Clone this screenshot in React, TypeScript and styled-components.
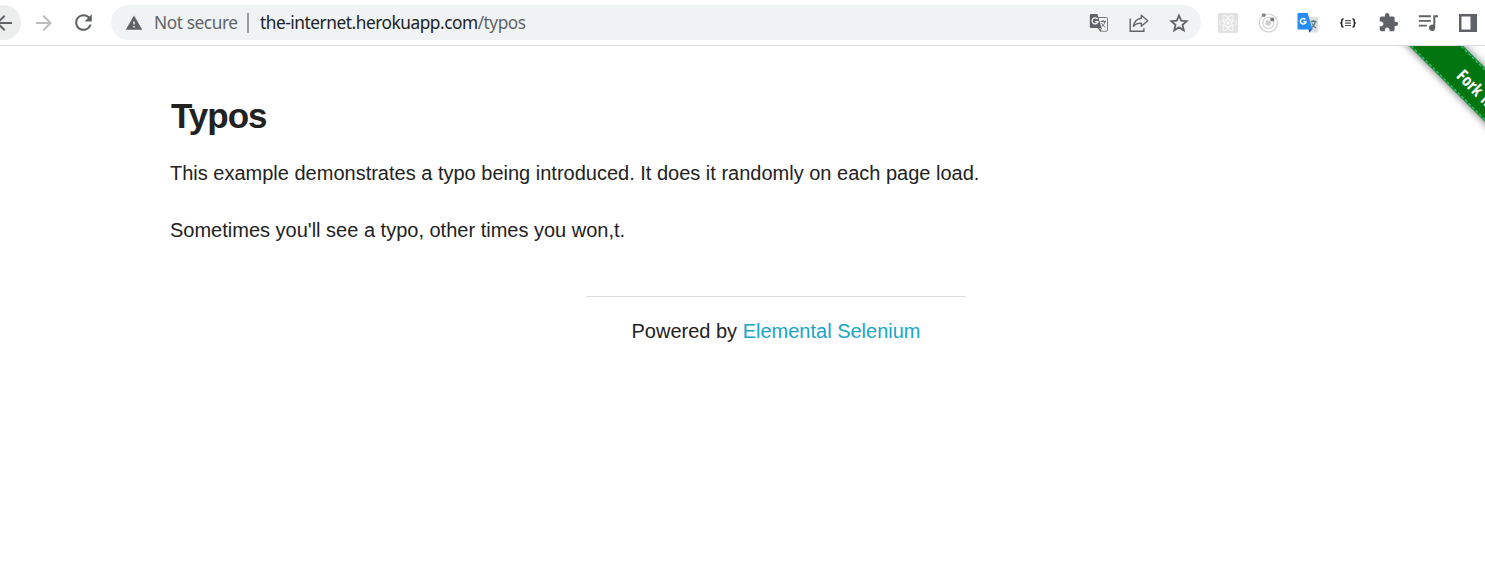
import React from "react";
import styled, { createGlobalStyle } from "styled-components";
import { MdArrowBack, MdArrowForward, MdRefresh, MdWarning, MdExtension } from "react-icons/md";

const GlobalStyle = createGlobalStyle`
  * { box-sizing: border-box; }
  body { margin: 0; background: #fff; overflow: hidden; }
`;

const Window = styled.div`
  display: flex;
  flex-direction: column;
  height: 561px;
`;

const Toolbar = styled.header`
  display: flex;
  align-items: center;
  height: 46px;
  border-bottom: 1px solid #dadce0;
  color: #5f6368;
  overflow: hidden;
`;

const NavButtons = styled.nav`
  display: flex;
  align-items: center;
  width: 111px;
  flex: none;
  gap: 5px;
  margin-left: -14px;
`;

const NavButton = styled.span<{ $hover?: boolean; $muted?: boolean }>`
  display: flex;
  flex: none;
  align-items: center;
  justify-content: center;
  width: 35px;
  height: 35px;
  border-radius: 50%;
  background: ${(p) => (p.$hover ? "#eceeee" : "transparent")};
  color: ${(p) => (p.$muted ? "#babcbe" : "#5f6368")};
`;

const AddressBar = styled.div`
  display: flex;
  align-items: center;
  width: 1090px;
  height: 35px;
  margin-left: 14px;
  padding: 0 2px 0 14px;
  border-radius: 18px;
  background: #eff3f3;
  flex: none;
  font: 17.3px "Noto Sans", sans-serif;
`;

const Security = styled.span`
  width: 84px;
  margin-left: 11px;
  white-space: nowrap;
  letter-spacing: -0.42px;
`;

const Separator = styled.span`
  width: 2px;
  height: 20px;
  margin: 0 11px 0 9px;
  background: #9b9ea1;
`;

const Url = styled.span`
  flex: 1;
  white-space: nowrap;
  letter-spacing: -0.47px;
`;

const Host = styled.span`
  color: #202124;
`;

const IconCell = styled.span`
  display: flex;
  flex: none;
  align-items: center;
  justify-content: center;
  width: 40px;
  height: 35px;
`;

const Extensions = styled.div`
  display: flex;
  flex: none;
  margin-left: 7px;
`;

const Page = styled.main`
  position: relative;
  flex: 1;
  overflow: hidden;
  padding: 49px 104px 0 170px;
  color: #222;
  font: 20px/28px "Liberation Sans", Arial, sans-serif;
`;

const Title = styled.h1`
  margin: 0 0 0 1px;
  font-size: 35px;
  line-height: 42px;
  letter-spacing: -1px;
`;

const Paragraph = styled.p`
  margin: 0 0 29px;
  white-space: nowrap;
`;

const Copy = styled.section`
  padding-top: 22px;
`;

const Footer = styled.footer`
  width: 380px;
  margin: 52px 0 0 416px;
  padding-top: 20px;
  border-top: 1px solid #ddd;
  text-align: center;
  white-space: nowrap;
`;

const Link = styled.a`
  color: #17a5c9;
  text-decoration: none;
`;

const Ribbon = styled.a`
  position: absolute;
  top: -40px;
  right: -138px;
  width: 200px;
  height: 38px;
  padding-left: 73px;
  transform: rotate(45deg);
  transform-origin: 0 0;
  background: #007510;
  box-shadow: 0 0 9px rgba(0, 0, 0, 0.6), inset 0 0 0 1px #0a9a45;
  color: #fff;
  font: bold 17px/41px "Open Sans", "Noto Sans", sans-serif;
  font-stretch: 75%;
  letter-spacing: 0;
  word-spacing: 2px;
  white-space: nowrap;

  &::after {
    content: "";
    position: absolute;
    inset: 1px 0;
    border: dashed #4cc88a;
    border-width: 1px 0;
  }
`;

const TranslatePage = () => (
  <svg width="20" height="20" viewBox="0 0 20 20">
    <path d="M9 4.5h8.5a1 1 0 0 1 1 1v11.7a1 1 0 0 1-1 1h-6.2z" fill="#f4f6f6" stroke="#777b7e" />
    <path d="M2 1h6.4l4.1 14H2a1.2 1.2 0 0 1-1.2-1.2V2.200A1.2 1.2 0 0 1 2 1z" fill="#5f6368" />
    <path d="M8.500 6.100A3 3 0 1 0 9 8.600H6.200" fill="none" stroke="#fff" strokeWidth="1.300" />
    <path d="M11.500 8.500H17M14 7v1.500M16 8.700c-.6 2.500-1.900 4-3.500 5M12.500 10c1 2 2.200 3.300 3.800 4.300M9 15l2.300 3 1.200-3" fill="none" stroke="#5f6368" />
  </svg>
);

const Share = () => (
  <svg width="20" height="20" viewBox="0 0 20 20" fill="none" stroke="#5f6368" strokeWidth="1.400">
    <path d="M1.200 5.500v12.700h13.700v-3" />
    <path d="M12.300 2.200l6.500 5.500-6.500 5.500V10.100c-3.200 0-5.900.7-7.800 3.200.5-4 3-7.400 7.800-8.100z" strokeLinejoin="round" />
  </svg>
);

const Star = () => (
  <svg width="20" height="20" viewBox="0 0 20 20">
    <path d="M10 2.500l2.200 5.100 5.500.5-4.200 3.700 1.300 5.500-4.800-2.900-4.800 2.900 1.300-5.500-4.200-3.700 5.500-.5z" fill="none" stroke="#5f6368" strokeWidth="1.800" />
  </svg>
);

const ReactTools = () => (
  <svg width="20" height="20" viewBox="0 0 20 20">
    <rect width="20" height="20" rx="1" fill="#e2e2e2" />
    <g fill="none" stroke="#f8f8f8" strokeWidth="1">
      <ellipse cx="10" cy="10" rx="8.500" ry="3.300" />
      <ellipse cx="10" cy="10" rx="8.500" ry="3.300" transform="rotate(60 10 10)" />
      <ellipse cx="10" cy="10" rx="8.500" ry="3.300" transform="rotate(120 10 10)" />
    </g>
    <circle cx="10" cy="10" r="1.800" fill="#f8f8f8" />
  </svg>
);

const Orbit = () => (
  <svg width="20" height="20" viewBox="0 0 20 20">
    <g fill="none" stroke="#d0d0d0" strokeWidth="1.200">
      <circle cx="10.300" cy="10" r="9" />
      <circle cx="10.300" cy="10" r="5.500" />
    </g>
    <circle cx="10.300" cy="10" r="2.800" fill="#ccc" />
    <circle cx="5.800" cy="2.200" r="1.900" fill="#858585" />
    <circle cx="14.300" cy="6.400" r="2" fill="#777" />
  </svg>
);

const Translate = () => (
  <svg width="22" height="22" viewBox="0 0 22 22">
    <path d="M10 5h10a1 1 0 0 1 1 1v13.500a1 1 0 0 1-1 1h-7z" fill="#dedfdf" />
    <path d="M13.500 9.500h6M16.500 8v1.500M18.500 9.700c-.7 3-2 4.500-3.700 5.800M15 11.500c1 1.800 2 3.500 4 4.500" fill="none" stroke="#5c7b84" strokeWidth="1.300" />
    <path d="M11.500 16.500h4.200l-3.400 4.300z" fill="#1746bc" />
    <path d="M1.800 1h8.800L15.500 17.500H1.800A1.300 1.300 0 0 1 .5 16.200V2.300A1.300 1.300 0 0 1 1.800 1z" fill="#258bf5" />
    <path d="M8.400 7.500A2.800 2.800 0 1 0 9 9.700H6.400" fill="none" stroke="#fff" strokeWidth="1.500" />
  </svg>
);

const Braces = () => (
  <svg width="18" height="18" viewBox="0 0 18 18" fill="none" stroke="#222" strokeWidth="1.500">
    <path d="M4.500 5H4q-1.200 0-1.200 1.200v1.600Q2.800 9 1.300 9q1.500 0 1.500 1.200v1.600Q2.800 13 4 13h.5M13.500 5h.5q1.200 0 1.200 1.200v1.600q0 1.200 1.500 1.200-1.500 0-1.500 1.200v1.600q0 1.200-1.200 1.200h-.5" />
    <path d="M6 6.700h6M6 9.100h6M6 11.500h6" stroke="#555" strokeWidth="1.200" />
  </svg>
);

const MediaQueue = () => (
  <svg width="20" height="18" viewBox="0 0 20 18" fill="#5f6368">
    <path d="M.8 1.300h12.100v1.900H.8zM.8 5.900h12.100v1.900H.8zM.8 10.700h8v1.900h-8z" />
    <path d="M15.300 1.300H20v2h-2.700v10.400a3.200 3.200 0 1 1-2-2.900z" />
  </svg>
);

const SidePanel = () => (
  <svg width="18" height="18" viewBox="0 0 18 18">
    <path fillRule="evenodd" d="M0 0h18v18H0zM2.500 2.500v13H11.500v-13z" fill="#5f6368" />
  </svg>
);

export default function App() {
  return (
    <Window>
      <GlobalStyle />
      <Toolbar>
        <NavButtons>
          <NavButton $hover><MdArrowBack size={24} /></NavButton>
          <NavButton $muted><MdArrowForward size={24} /></NavButton>
          <NavButton><MdRefresh size={25} /></NavButton>
        </NavButtons>
        <AddressBar>
          <MdWarning size={18} />
          <Security>Not secure</Security>
          <Separator />
          <Url><Host>the-internet.herokuapp.com</Host>/typos</Url>
          <IconCell><TranslatePage /></IconCell>
          <IconCell><Share /></IconCell>
          <IconCell><Star /></IconCell>
        </AddressBar>
        <Extensions>
          <IconCell><ReactTools /></IconCell>
          <IconCell><Orbit /></IconCell>
          <IconCell><Translate /></IconCell>
          <IconCell><Braces /></IconCell>
          <IconCell><MdExtension size={21} /></IconCell>
          <IconCell><MediaQueue /></IconCell>
          <IconCell><SidePanel /></IconCell>
        </Extensions>
      </Toolbar>
      <Page>
        <Title>Typos</Title>
        <Copy>
          <Paragraph>This example demonstrates a typo being introduced. It does it randomly on each page load.</Paragraph>
          <Paragraph>Sometimes you'll see a typo, other times you won,t.</Paragraph>
        </Copy>
        <Footer>Powered by <Link>Elemental Selenium</Link></Footer>
        <Ribbon>Fork me on GitHub</Ribbon>
      </Page>
    </Window>
  );
}
